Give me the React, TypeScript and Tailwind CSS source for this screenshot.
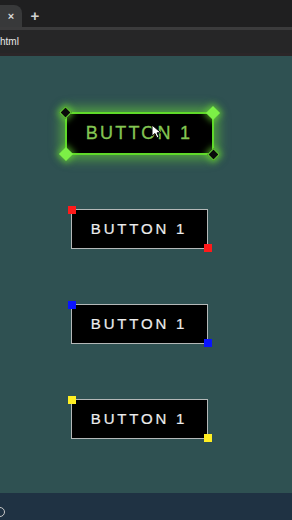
export default function App() {
  const plain = [
    { top: "mt-[54px]", dot: "bg-[#ff1a1a]" },
    { top: "mt-[55px]", dot: "bg-[#0a14ff]" },
    { top: "mt-[55px]", dot: "bg-[#ffee22]" },
  ];

  return (
    <div className="flex h-[520px] w-[292px] flex-col overflow-hidden bg-[#2f5152] font-['Liberation_Sans',Arial,sans-serif]">
      {/* tab strip */}
      <div className="flex h-[27px] items-end bg-[#1f1f20]">
        <div className="flex h-[22px] w-[22px] items-center justify-center rounded-tr-lg bg-[#38393a] text-[11px] font-bold text-[#d8d8d8]">
          ×
        </div>
        <div className="flex h-[22px] w-[26px] items-center justify-center text-[15px] font-bold text-[#d0d0d0]">
          +
        </div>
      </div>
      <div className="h-[3px] bg-[#3b3b3c]" />
      {/* address bar */}
      <div className="flex h-[23px] items-center bg-[#262627] text-[10px] text-[#e6e6e6]">
        html
      </div>
      <div className="h-[3px] bg-[#2b2628]" />

      {/* page */}
      <div className="flex flex-1 flex-col items-center pr-[14px]">
        <div className="relative mt-[56px] flex h-[43px] w-[149px] items-center justify-center rounded-[4px] border-2 border-[#5fd92a] bg-black shadow-[0_0_12px_4px_rgba(110,230,50,0.55)]">
          <span className="text-[18px] tracking-[2.2px] text-[#84c653] [-webkit-text-stroke:0.3px_#84c653]">BUTTON 1</span>
          <span className="absolute -left-[6px] -top-[6px] h-[9px] w-[9px] rotate-45 border-[1.5px] border-[#6ee03a] bg-[#0a0a0a] shadow-[0_0_6px_2px_rgba(110,230,50,0.6)]" />
          <span className="absolute -right-[6px] -top-[6px] h-[10px] w-[10px] rotate-45 bg-[#7cf046] shadow-[0_0_6px_2px_rgba(110,230,50,0.6)]" />
          <span className="absolute -bottom-[6px] -left-[6px] h-[10px] w-[10px] rotate-45 bg-[#7cf046] shadow-[0_0_6px_2px_rgba(110,230,50,0.6)]" />
          <span className="absolute -bottom-[6px] -right-[6px] h-[9px] w-[9px] rotate-45 border-[1.5px] border-[#6ee03a] bg-[#0a0a0a] shadow-[0_0_6px_2px_rgba(110,230,50,0.6)]" />
          <svg className="absolute left-[84px] top-[10px]" width="11" height="15" viewBox="0 0 11 15">
            <path d="M1 1 L1 12 L4 9.5 L6 14 L8 13 L6 8.8 L10 8.8 Z" fill="#ffffff" stroke="#000000" strokeWidth="1" />
          </svg>
        </div>

        {plain.map((b, i) => (
          <div
            key={i}
            className={`relative ${b.top} flex h-[40px] w-[137px] items-center justify-center border border-[#b4b8b8] bg-black`}
          >
            <span className="text-[15px] tracking-[2.8px] text-[#ededed] [-webkit-text-stroke:0.2px_#ededed]">BUTTON 1</span>
            <span className={`absolute -left-[4px] -top-[4px] h-[8px] w-[8px] ${b.dot}`} />
            <span className={`absolute -bottom-[4px] -right-[5px] h-[8px] w-[8px] ${b.dot}`} />
          </div>
        ))}
      </div>

      {/* bottom bar */}
      <div className="relative h-[27px] bg-[#1f3243]">
        <span className="absolute -left-[5px] top-[14px] h-[10px] w-[10px] rounded-full border border-[#c8c8c8]" />
      </div>
    </div>
  );
}
